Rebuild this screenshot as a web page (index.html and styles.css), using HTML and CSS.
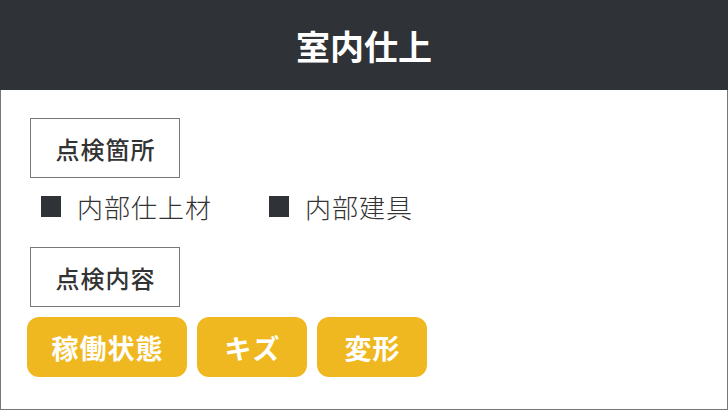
FILE: index.html
```html
<!DOCTYPE html>
<html lang="ja">
<head>
    <meta charset="UTF-8">
    <meta name="viewport" content="width=device-width, initial-scale=1.0">
    <title>室内仕上</title>
    <link rel="stylesheet" href="styles.css">
</head>
<body>
    <header class="page-header">
        <h1>室内仕上</h1>
    </header>

    <main class="panel">
        <!-- 点検箇所 -->
        <div class="label-box">点検箇所</div>
        <ul class="item-list">
            <li><span class="mark"></span>内部仕上材</li>
            <li><span class="mark"></span>内部建具</li>
        </ul>

        <!-- 点検内容 -->
        <div class="label-box second">点検内容</div>
        <div class="tag-row">
            <button class="tag">稼働状態</button>
            <button class="tag">キズ</button>
            <button class="tag">変形</button>
        </div>
    </main>
</body>
</html>
```

FILE: styles.css
```css
* {
    box-sizing: border-box;
}
body {
    margin: 0;
    width: 728px;
    height: 410px;
    font-family: "Noto Sans CJK JP", "Noto Sans", sans-serif;
    background-color: #ffffff;
    color: #333333;
    display: flex;
    flex-direction: column;
}
.page-header {
    height: 90px;
    background-color: #2f3236;
    display: flex;
    align-items: center;
    justify-content: center;
}
.page-header h1 {
    margin: 0;
    color: #ffffff;
    font-size: 34px;
    font-weight: 700;
    letter-spacing: 0;
}
.panel {
    flex: 1;
    border: 1px solid #777777;
    border-top: none;
    padding: 28px 26px 0;
    display: flex;
    flex-direction: column;
    align-items: flex-start;
}
.label-box {
    width: 150px;
    height: 60px;
    margin-left: 3px;
    border: 1px solid #777777;
    display: flex;
    align-items: center;
    justify-content: center;
    font-size: 24px;
    font-weight: 500;
    letter-spacing: 1px;
    text-indent: 1px;
    color: #333333;
}
.label-box.second {
    margin-top: 21px;
}
.item-list {
    list-style: none;
    margin: 8px 0 0;
    padding: 0 0 0 14px;
    display: flex;
    gap: 57px;
}
.item-list li {
    display: flex;
    align-items: center;
    height: 40px;
    font-size: 26px;
    font-weight: 300;
    letter-spacing: 1px;
    color: #333333;
}
.mark {
    display: inline-block;
    width: 20px;
    height: 21px;
    margin-right: 16px;
    background-color: #2f3236;
}
.tag-row {
    display: flex;
    gap: 10px;
    margin-top: 10px;
}
.tag {
    min-width: 110px;
    height: 60px;
    padding: 0 23.5px;
    border: none;
    border-radius: 12px;
    background-color: #f0b820;
    color: #ffffff;
    font-family: inherit;
    font-size: 27px;
    font-weight: 700;
    letter-spacing: 1px;
    text-indent: 1px;
    cursor: pointer;
}
```
